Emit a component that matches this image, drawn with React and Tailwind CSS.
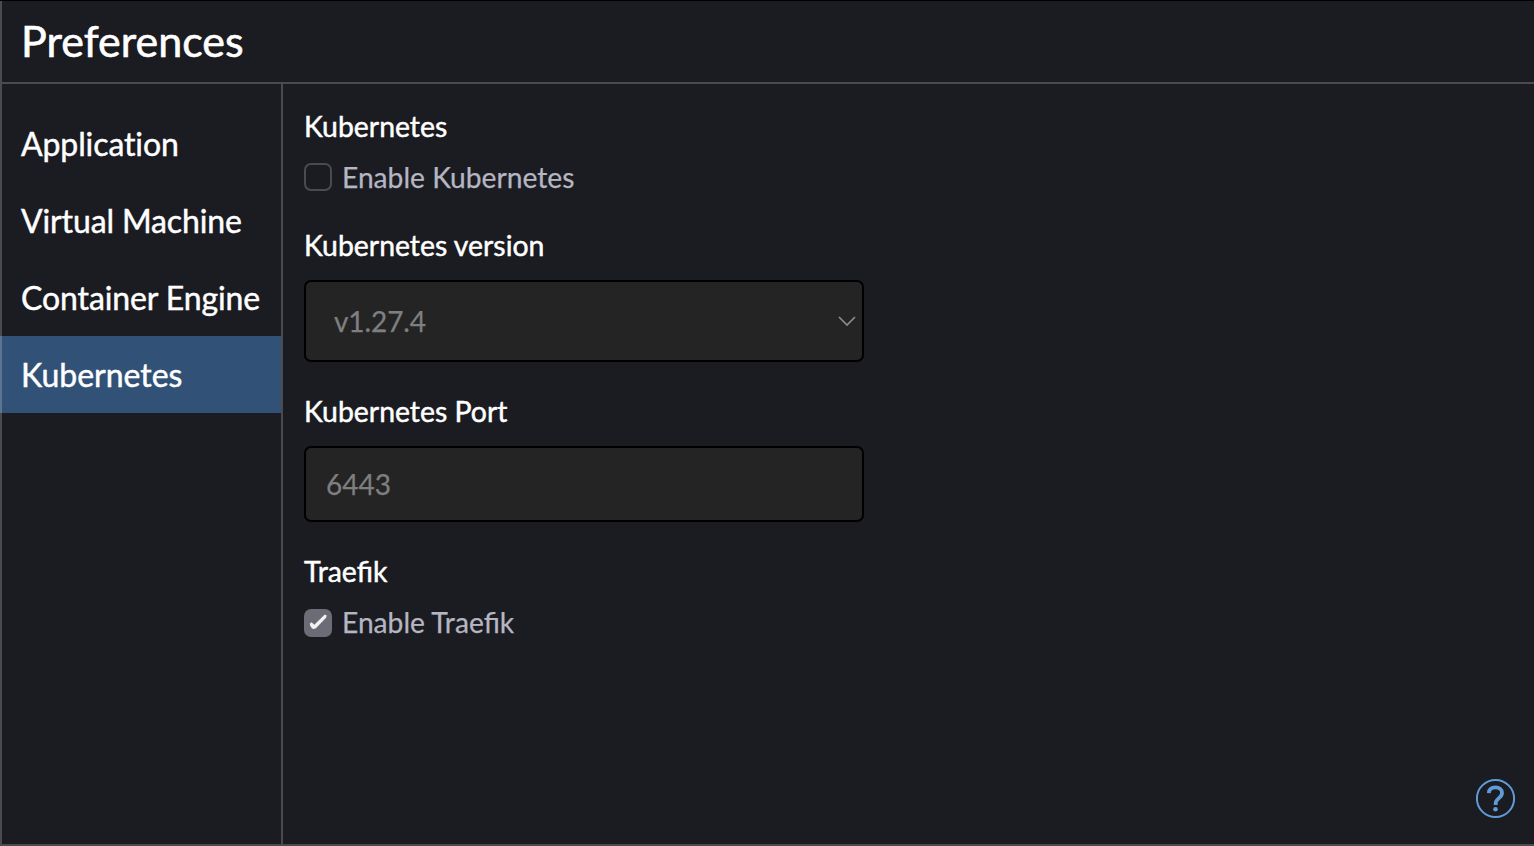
const nav = [
  { label: 'Application', tracking: 'tracking-[-0.1px]' },
  { label: 'Virtual Machine', tracking: 'tracking-[-0.13px]' },
  { label: 'Container Engine', tracking: 'tracking-[-0.1px]' },
  { label: 'Kubernetes', tracking: 'tracking-normal', active: true },
];

function Checkbox({ label, checked, className, labelClassName = '' }) {
  return (
    <div className={`flex h-7 items-center gap-[10px] ${className}`}>
      <span className={checked ? 'flex size-7 items-center justify-center rounded-[7px] bg-[#6c6c76]' : 'size-7 rounded-[7px] border-2 border-[#4a4a4f]'}>
        {checked && (
          <svg className="size-7" viewBox="0 0 28 28" fill="#f2f2f2">
            <path d="M5.800 14.800 7.600 13.300 10.300 15.700 20.500 5.800 22.600 6.300 22.300 8.600 11.900 19.300Q9.600 20.900 7.800 19.300Q6 17.300 5.800 14.800Z" />
          </svg>
        )}
      </span>
      <span className={`text-[28.2px] leading-[27px] text-[#b6b6c2] [-webkit-text-stroke:0.25px] ${labelClassName}`}>{label}</span>
    </div>
  );
}

export default function App() {
  return (
    <div className="flex h-[846px] w-[1534px] flex-col border-t border-b-2 border-t-black border-b-[#4a4a4f] bg-[#1b1c21] font-[Lato,sans-serif] text-white">
      <header className="flex h-[83px] shrink-0 items-center border-b-2 border-l-2 border-[#4a4a4f] pb-[2px] pl-[19px]">
        <h1 className="text-[43px] leading-[50px] [-webkit-text-stroke:0.6px]">Preferences</h1>
      </header>
      <div className="flex min-h-0 flex-1">
        <nav className="flex w-[283px] shrink-0 flex-col border-r-2 border-[#4a4a4f]">
          <div className="h-[21px] border-l-2 border-[#4a4a4f]" />
          {nav.map(({ label, tracking, active }) => (
            <div key={label} className={`flex h-[77px] items-center border-l-2 pl-[19px] text-[32px] whitespace-nowrap [-webkit-text-stroke:0.45px] [font-variant-ligatures:none] ${tracking} ${active ? 'border-[#5b7491] bg-[#315276]' : 'border-[#4a4a4f]'}`}>{label}</div>
          ))}
          <div className="flex-1 border-l-2 border-[#4a4a4f]" />
        </nav>
        <main className="flex flex-1 flex-col pt-[25px] pl-[21px] text-[28.400px] leading-[34px]">
          <h2 className="[-webkit-text-stroke:0.45px]">Kubernetes</h2>
          <Checkbox className="mt-[20px]" label="Enable Kubernetes" />
          <h2 className="mt-[37px] [-webkit-text-stroke:0.45px]">Kubernetes version</h2>
          <div className="mt-[18px] flex h-[82px] w-[560px] items-center justify-between rounded-[7px] border-2 border-black bg-[#242425] pr-[6px] pl-7 text-[28px] tracking-[-0.1px] text-[#7f7f80] [-webkit-text-stroke:0.25px]">
            <span>v1.27.4</span>
            <svg width="18" height="10" viewBox="0 0 18 10" fill="none" stroke="#8c8c8e" strokeWidth="1.7"><path d="m1 1 8 8 8-8" /></svg>
          </div>
          <h2 className="mt-[32px] [-webkit-text-stroke:0.45px]">Kubernetes Port</h2>
          <div className="mt-[18px] flex h-[76px] w-[560px] items-center rounded-[7px] border-2 border-black bg-[#242425] pl-5 text-[28px] text-[#7f7f80] [-webkit-text-stroke:0.25px]">6443</div>
          <h2 className="mt-[32px] [-webkit-text-stroke:0.45px]">Traefik</h2>
          <Checkbox className="mt-[21px]" label="Enable Traefik" labelClassName="pb-[2px]" checked />
          <div className="mt-auto mr-[18px] mb-[25px] ml-auto">
            <svg width="41" height="41" viewBox="0 0 41 41" fill="none" stroke="#5e9bd8">
              <circle cx="20.500" cy="20.500" r="18.600" strokeWidth="2" />
              <path strokeWidth="3.800" d="M13.800 15.200C14 11.500 16.600 9.400 20.500 9.400c4 0 6.500 2.300 6.500 5.500 0 5.200-6.300 5.200-6.300 10.600v1.500" />
              <circle cx="20.500" cy="31.300" r="2.300" fill="#5e9bd8" stroke="none" />
            </svg>
          </div>
        </main>
      </div>
    </div>
  );
}
